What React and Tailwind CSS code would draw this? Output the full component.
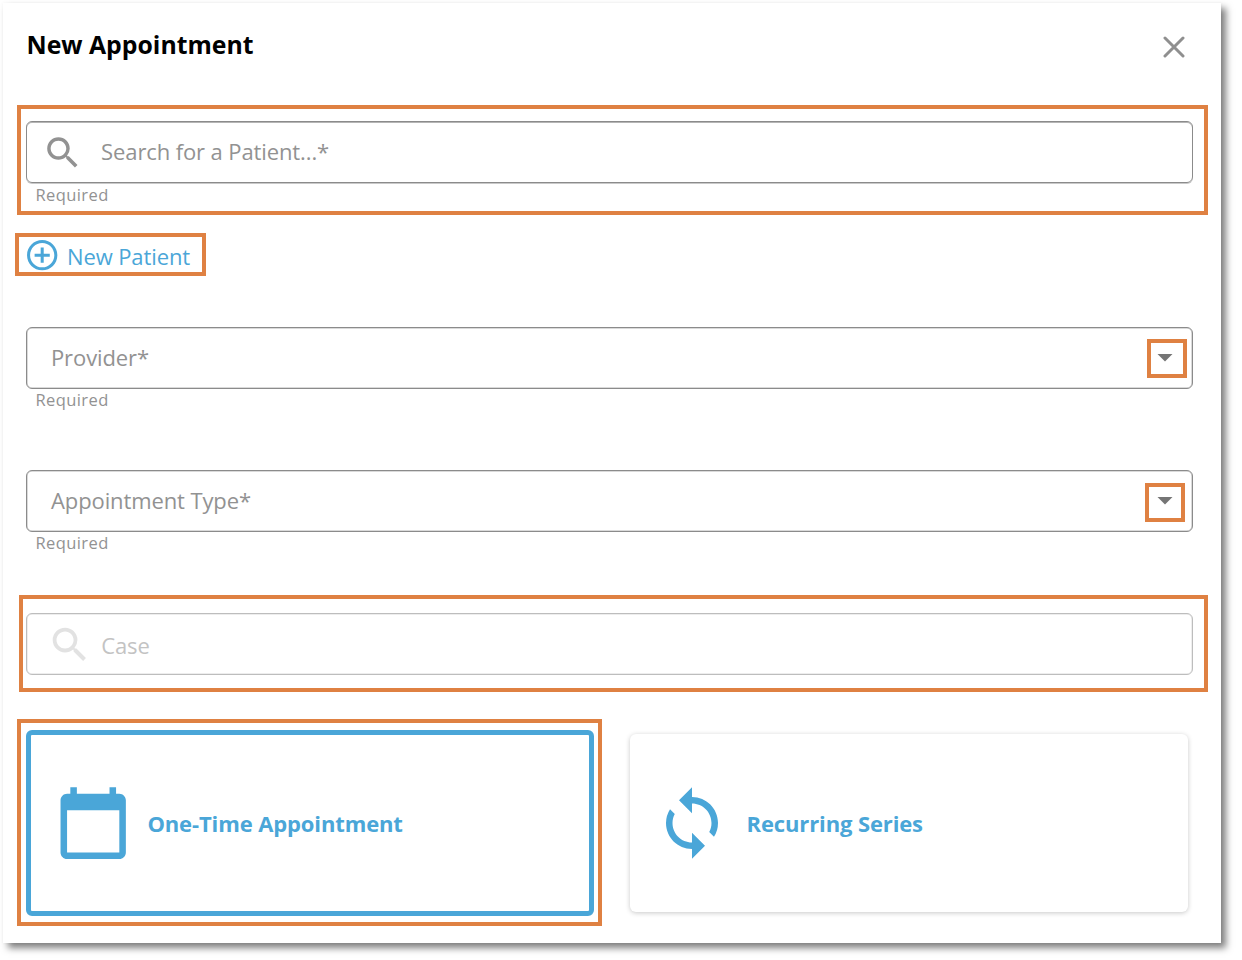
import React from "react";
import { MdSearch, MdAddCircleOutline, MdCalendarToday, MdSync, MdArrowDropDown } from "react-icons/md";

function Callout({ className, children }) {
  return <div className={`border-4 border-[#df8142] ${className}`}>{children}</div>;
}

function Field({ className = "", children }) {
  return (
    <div className={`flex w-[1167px] items-center rounded-[6px] border ${className}`}>
      {children}
    </div>
  );
}

function Required() {
  return <p className="pl-[9.5px] text-[16.5px] leading-[22px] tracking-[0.4px] text-[#929292]">Required</p>;
}

export default function App() {
  return (
    <div className="h-[960px] w-[1242px] overflow-hidden bg-white pt-[3px] pl-[3px] font-['Open_Sans',sans-serif]">
      <section className="flex h-[940px] w-[1218px] flex-col items-start bg-white shadow-[5px_5px_7px_rgba(0,0,0,0.5),0_0_3px_rgba(0,0,0,0.04)]">
        <header className="flex h-[102px] w-full items-start justify-between pr-[36px] pl-[24px]">
          <h1 className="mt-[23px] -ml-[0.5px] text-[24.8px] leading-[36px] font-bold text-black">New Appointment</h1>
          <button aria-label="Close" className="mt-[32.5px]">
            <svg width="22" height="22" viewBox="0 0 22 22" fill="none" stroke="#8f8f8f" strokeWidth="3" strokeLinecap="round">
              <path d="M2 2L20 20M20 2L2 20" />
            </svg>
          </button>
        </header>

        <Callout className="ml-[14px] h-[110px] w-[1191px] pt-[12px] pl-[5px]">
          <Field className="h-[62px] border-[#8b8b8b] shadow-[0_1px_0_#c9c9c9,inset_0_1px_0_#b5b5b5]">
            <MdSearch className="mt-[2px] ml-[15px] size-[41.6px] text-[#929292]" />
            <span className="-mt-[2px] ml-[17.5px] text-[22px] leading-[30px] tracking-[-0.11px] text-[#929292]">Search for a Patient...*</span>
          </Field>
          <div className="mt-[1px]">
            <Required />
          </div>
        </Callout>

        <Callout className="mt-[18px] ml-[12px] flex h-[43px] w-[191px] items-center pl-[5px]">
          <MdAddCircleOutline className="mt-[1.4px] size-[36.4px] shrink-0 text-[#4aa6d8]" />
          <span className="mt-[2px] ml-[6.6px] text-[22px] leading-[30px] tracking-[-0.11px] whitespace-nowrap text-[#4aa6d8]">New Patient</span>
        </Callout>

        <div className="mt-[51px] ml-[23px]">
          <Field className="h-[62px] justify-between border-[#8b8b8b] pr-[5px] pl-[24px] shadow-[inset_0_0_0_0.5px_#b5b5b5]">
            <span className="-mt-[2px] text-[22px] leading-[30px] tracking-[-0.11px] text-[#929292]">Provider*</span>
            <Callout className="flex h-[39px] w-[40px] items-center justify-center">
              <MdArrowDropDown className="-mt-[2px] mr-[4px] size-[36px] shrink-0 text-[#757575]" />
            </Callout>
          </Field>
          <Required />
        </div>

        <div className="mt-[59px] ml-[23px]">
          <Field className="h-[62px] justify-between border-[#8b8b8b] pr-[7px] pl-[24px] shadow-[inset_0_0_0_0.5px_#b5b5b5]">
            <span className="-mt-[2px] text-[22px] leading-[30px] tracking-[-0.11px] text-[#929292]">Appointment Type*</span>
            <Callout className="mt-[2px] flex h-[39px] w-[40px] items-center justify-center">
              <MdArrowDropDown className="-mt-[4.5px] size-[36px] shrink-0 text-[#757575]" />
            </Callout>
          </Field>
          <Required />
        </div>

        <Callout className="mt-[41px] ml-[16px] h-[97px] w-[1189px] pt-[14px] pl-[3px]">
          <Field className="h-[62px] border-[#bdbdbd] shadow-[inset_0_0_0_0.5px_#dcdcdc]">
            <MdSearch className="mt-[1px] ml-[20px] size-[45.6px] text-[#e2e2e2]" />
            <span className="mt-[2px] ml-[8.6px] text-[22px] leading-[30px] tracking-[-0.1px] text-[#c3c3c3]">Case</span>
          </Field>
        </Callout>

        <div className="mt-[27px] ml-[14px] flex items-start">
          <Callout className="h-[207px] w-[585px] pt-[7px] pl-[5px]">
            <div className="flex h-[186px] w-[568px] items-center rounded-[6px] border-[5px] border-[#4aa6d8] pl-[23px]">
              <MdCalendarToday className="size-[78.4px] text-[#4aa6d8]" />
              <span className="ml-[15px] text-[22px] leading-[30px] font-bold tracking-[-0.12px] text-[#4aa6d8]">One-Time Appointment</span>
            </div>
          </Callout>
          <div className="mt-[15px] ml-[28px] flex h-[178px] w-[558px] items-center rounded-[6px] bg-white pl-[23px] shadow-[0_1px_5px_rgba(0,0,0,0.22)]">
            <MdSync className="size-[78px] text-[#4aa6d8]" />
            <span className="ml-[15.5px] text-[22px] leading-[30px] font-bold tracking-[-0.12px] text-[#4aa6d8]">Recurring Series</span>
          </div>
        </div>
      </section>
    </div>
  );
}
